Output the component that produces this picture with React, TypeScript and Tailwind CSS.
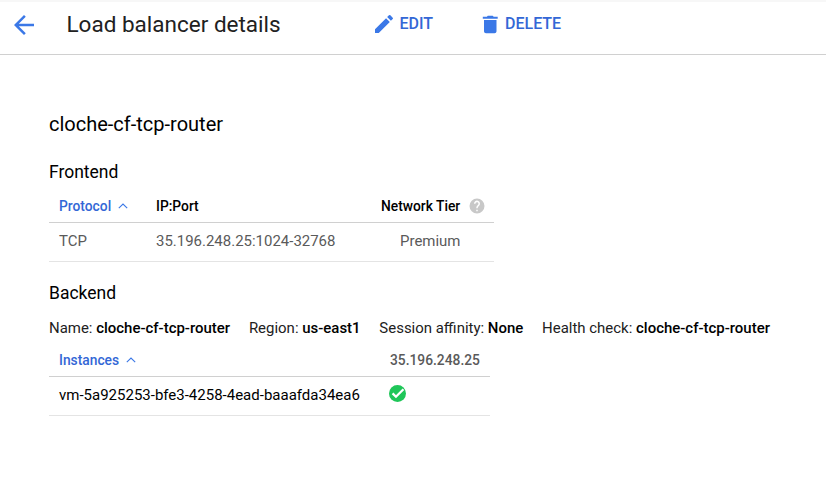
import React from "react";

function Caret() {
  return (
    <svg className="ml-[7px] h-[6px] w-[10px]" viewBox="0 0 10 6" fill="none" stroke="#3b78e7" strokeWidth="1.1">
      <path d="M0.8 5.2 5 1l4.2 4.2" />
    </svg>
  );
}

function Item({ label, value }: { label: string; value: string }) {
  return (
    <span className="text-[#212121]">
      {label}: <span className="font-medium text-black">{value}</span>
    </span>
  );
}

export default function App() {
  return (
    <div className="h-[480px] w-[826px] overflow-hidden bg-white font-['Roboto',sans-serif] whitespace-nowrap text-black">
      <header className="flex h-[55px] items-start border-t-2 border-b border-t-[#f7f7f7] border-b-[#d0d0d0] pt-[8px] pl-[9px] text-[#3367d6]">
        <svg className="h-[30px] w-[30px]" viewBox="0 0 24 24" fill="#3b78e7">
          <path d="M20 11H7.83l5.59-5.59L12 4l-8 8 8 8 1.41-1.41L7.83 13H20v-2z" />
        </svg>
        <h1 className="ml-[27.5px] w-[305.5px] text-[22.5px] leading-[28px] text-[#212121]">Load balancer details</h1>
        <div className="flex w-[107px] items-center text-[16px] leading-[28px] font-medium">
          <svg className="mr-[3.5px] h-[24px] w-[24px]" viewBox="0 0 24 24" fill="#3b78e7">
            <path d="M3 17.25V21h3.75L17.81 9.94l-3.75-3.75L3 17.25zM20.71 7.04a1 1 0 0 0 0-1.41l-2.34-2.34a1 1 0 0 0-1.41 0l-1.83 1.83 3.75 3.75 1.83-1.83z" />
          </svg>
          EDIT
        </div>
        <div className="flex items-center text-[16px] leading-[28px] font-medium">
          <svg className="mr-[2px] h-[24px] w-[24px]" viewBox="0 0 24 24" fill="#3b78e7">
            <path d="M5 19.200c0 1.100.9 2 2 2h8.500c1.100 0 2-.9 2-2V8H5v11.200zM18.700 4.800h-4l-1-1H8.800l-1 1h-4v1.900h14.900z" />
          </svg>
          DELETE
        </div>
      </header>
      <main className="pt-[55px] pl-[49px]">
        <h2 className="text-[20px] leading-[28px]">cloche-cf-tcp-router</h2>
        <h3 className="mt-[22px] text-[17.5px] leading-[24px]">Frontend</h3>
        <div className="mt-[6px] w-[445px]">
          <div className="flex h-[33px] items-center border-b border-[#d0d0d0] pl-[10px] text-[13.8px] font-medium">
            <div className="flex w-[97px] items-center text-[#3367d6]">Protocol<Caret /></div>
            <div className="w-[225px]">IP:Port</div>
            <div className="flex items-center">
              Network Tier
              <svg className="ml-[7.5px] h-[18px] w-[18px]" viewBox="0 0 24 24" fill="#c8c8c8">
                <path d="M12 2a10 10 0 1 0 0 20 10 10 0 0 0 0-20zm1 17h-2v-2h2v2zm2.070-7.750-.9.920C13.450 12.900 13 13.500 13 15h-2v-.5c0-1.100.45-2.100 1.170-2.830l1.240-1.260A2 2 0 1 0 10 9H8a4 4 0 1 1 7.070 2.250z" />
              </svg>
            </div>
          </div>
          <div className="flex h-[39px] items-center border-b border-[#e4e4e4] pb-[2px] pl-[10px] text-[14.98px] text-[#5a5a5a]">
            <div className="w-[97px]">TCP</div>
            <div className="w-[244px]">35.196.248.25:1024-32768</div>
            <div>Premium</div>
          </div>
        </div>
        <h3 className="mt-[19px] text-[17.5px] leading-[24px]">Backend</h3>
        <div className="mt-[13px] flex gap-[18.8px] text-[14.96px] leading-[20px]">
          <Item label="Name" value="cloche-cf-tcp-router" />
          <Item label="Region" value="us-east1" />
          <Item label="Session affinity" value="None" />
          <Item label="Health check" value="cloche-cf-tcp-router" />
        </div>
        <div className="mt-[6px] w-[441px]">
          <div className="flex h-[33px] items-center border-b border-[#d0d0d0] pl-[10px] text-[13.8px] font-medium">
            <div className="flex w-[331px] items-center text-[#3367d6]">Instances<Caret /></div>
            <div className="text-[#5a5a5a]">35.196.248.25</div>
          </div>
          <div className="flex h-[39px] items-center border-b border-[#e4e4e4] pb-[2px] pl-[10px] text-[15px]">
            <div className="w-[330px]">vm-5a925253-bfe3-4258-4ead-baaafda34ea6</div>
            <svg className="mb-[3px] h-[17px] w-[17px]" viewBox="2 2 20 20">
              <circle cx="12" cy="12" r="10" fill="#1fc659" />
              <path d="m6.200 11.800 4 4 8.800-8.800" fill="none" stroke="#fff" strokeWidth="2.700" />
            </svg>
          </div>
        </div>
      </main>
    </div>
  );
}
